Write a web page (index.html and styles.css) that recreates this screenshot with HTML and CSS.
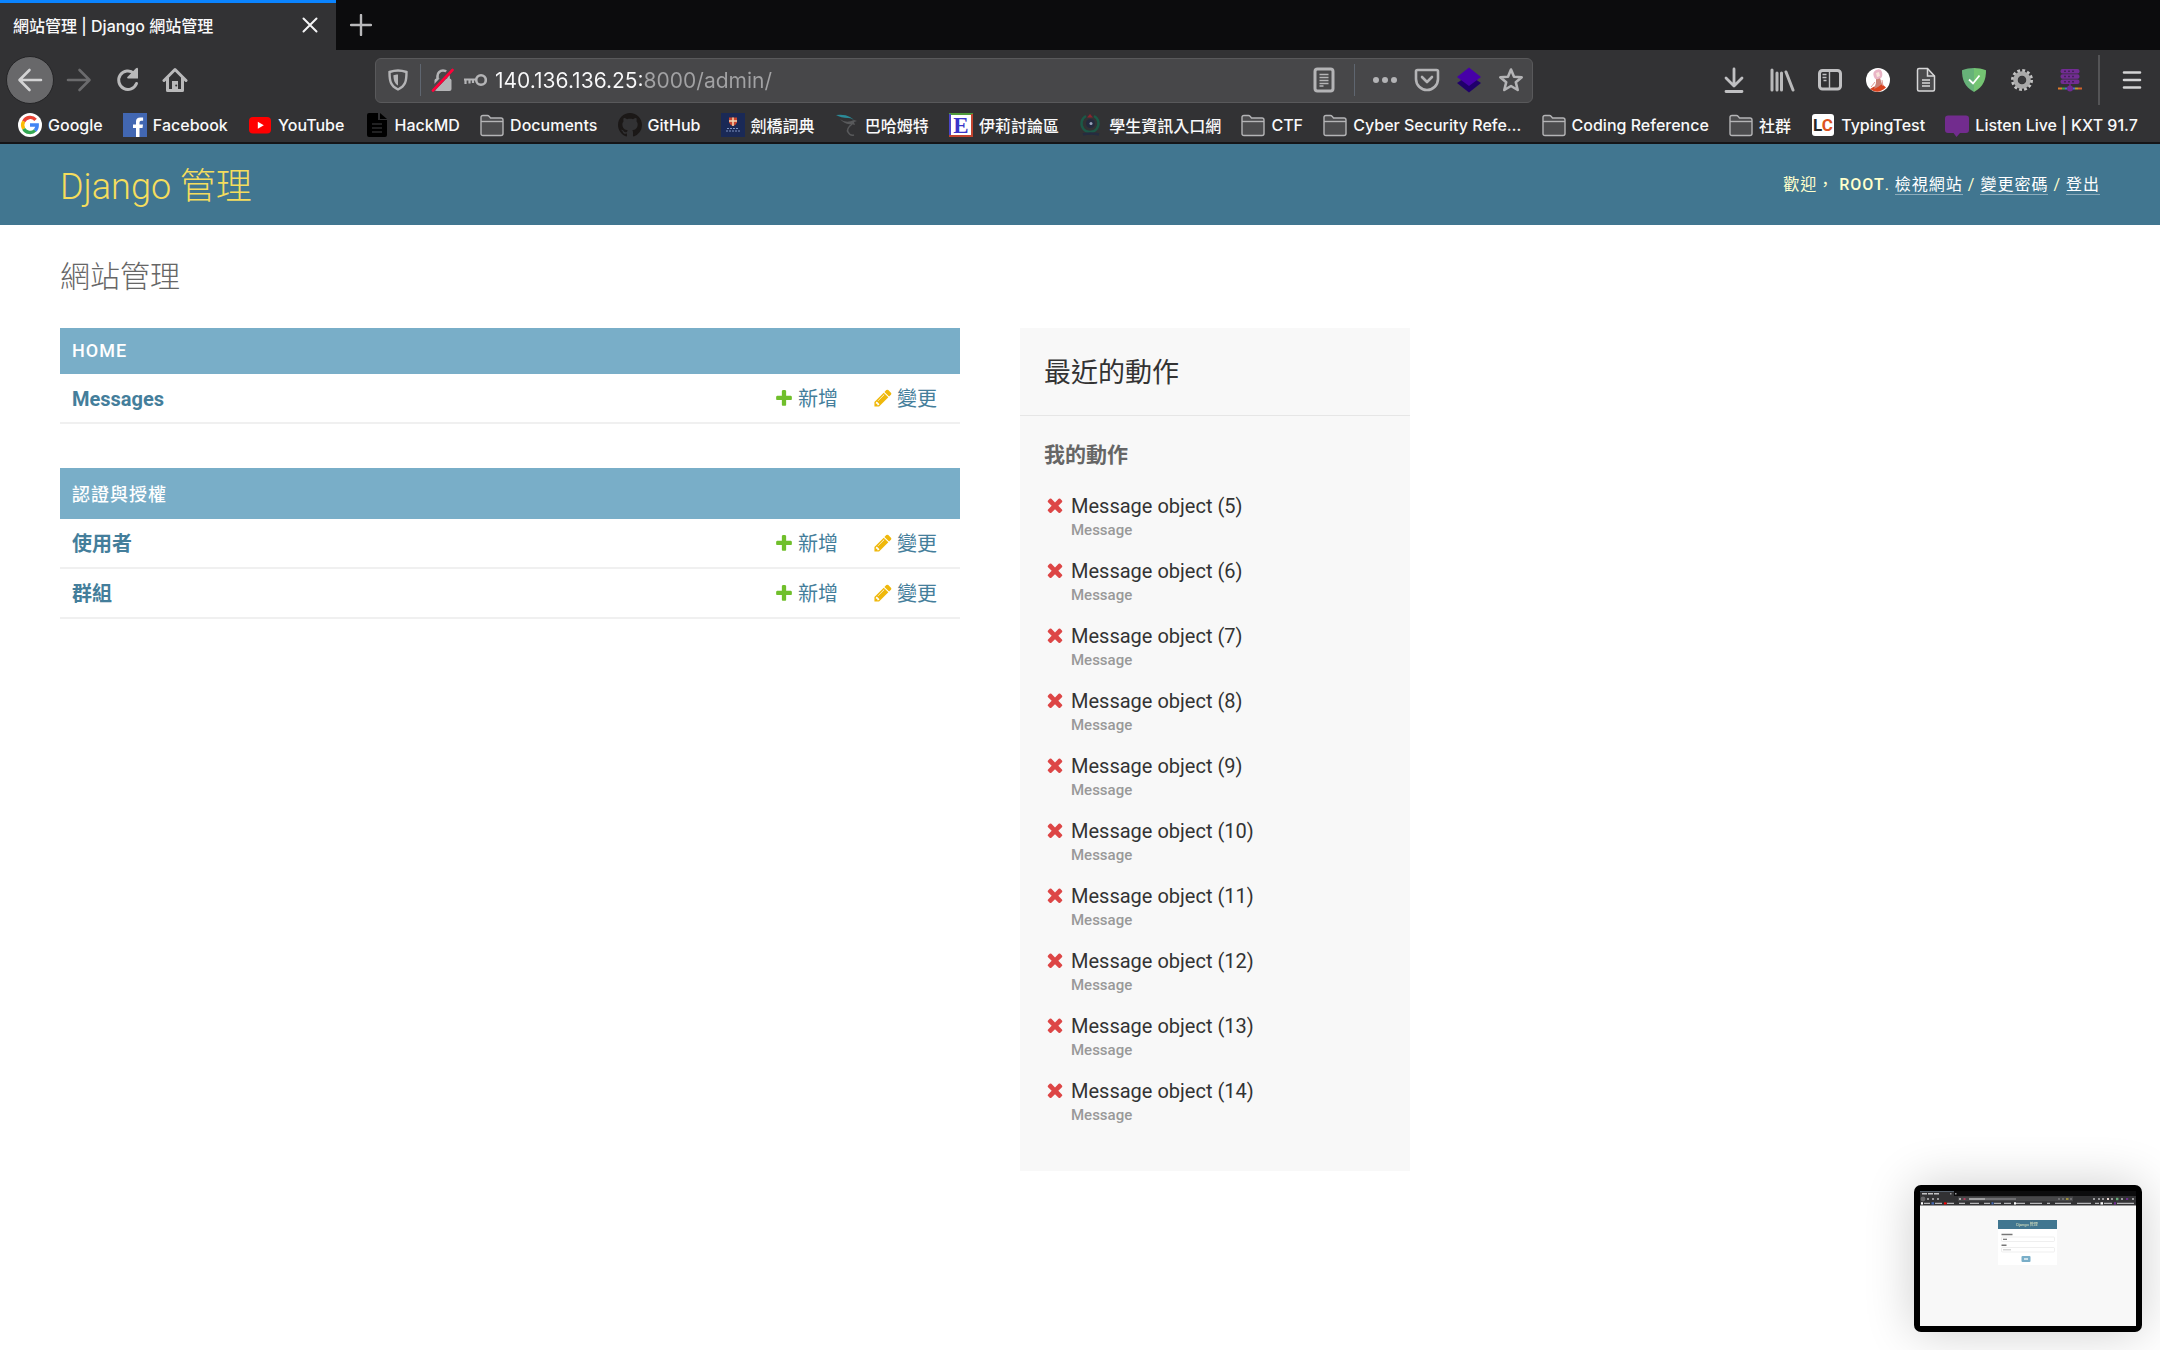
FILE: index.html
```html
<!DOCTYPE html>
<html lang="zh-Hant">
<head>
    <meta charset="UTF-8">
    <meta name="viewport" content="width=device-width, initial-scale=1.0">
    <title>網站管理 | Django 網站管理</title>
    <link rel="stylesheet" href="styles.css">
</head>
<body>
    <!-- Shared icons -->
    <svg class="sprite" aria-hidden="true">
        <symbol id="i-add" viewBox="0 0 1792 1792"><path fill="#70bf2b" d="M1600 796v192q0 40-28 68t-68 28h-416v416q0 40-28 68t-68 28h-192q-40 0-68-28t-28-68v-416h-416q-40 0-68-28t-28-68v-192q0-40 28-68t68-28h416v-416q0-40 28-68t68-28h192q40 0 68 28t28 68v416h416q40 0 68 28t28 68z"/></symbol>
        <symbol id="i-change" viewBox="0 0 1792 1792"><path fill="#efb80b" d="M491 1536l91-91-235-235-91 91v107h128v128h107zm523-928q0-22-22-22-10 0-17 7l-542 542q-7 7-7 17 0 22 22 22 10 0 17-7l542-542q7-7 7-17zm-54-192l416 416-832 832h-416v-416zm683 96q0 53-37 90l-166 166-416-416 166-165q36-38 90-38 53 0 91 38l235 234q37 39 37 91z"/></symbol>
        <symbol id="i-delete" viewBox="0 0 1792 1792"><path fill="#dd4646" d="M1490 1322q0 40-28 68l-136 136q-28 28-68 28t-68-28l-294-294-294 294q-28 28-68 28t-68-28l-136-136q-28-28-28-68t28-68l294-294-294-294q-28-28-28-68t28-68l136-136q28-28 68-28t68 28l294 294 294-294q28-28 68-28t68 28l136 136q28 28 28 68t-28 68l-294 294 294 294q28 28 28 68z"/></symbol>
        <symbol id="i-folder" viewBox="0 0 24 24"><path d="M1 4.500q0-2 2-2h4.500q1 0 1.600.8l1.400 1.700h10.500q2 0 2 2v13.500q0 2-2 2h-18q-2 0-2-2z" fill="#4c4c4e" stroke="#b4b4b6" stroke-width="1.400"/><path d="M1 8.500h22" stroke="#b4b4b6" stroke-width="1.400"/></symbol>
    </svg>

    <div class="browser">
        <div class="tabs">
            <div class="tab">
                <span class="tab-title">網站管理 | Django 網站管理</span>
                <button class="tab-close" aria-label="Close tab"><svg width="16" height="16" viewBox="0 0 16 16"><path d="M1.500 1.500l13 13M14.500 1.500l-13 13" stroke="#f4f4f5" stroke-width="2" stroke-linecap="round"/></svg></button>
            </div>
            <button class="tab-new" aria-label="New tab"><svg width="22" height="22" viewBox="0 0 22 22"><path d="M11 1v20M1 11h20" stroke="#b9b9ba" stroke-width="2.400" stroke-linecap="round"/></svg></button>
        </div>

        <div class="toolbar">
            <button class="tool back" aria-label="Back"><svg width="26" height="26" viewBox="0 0 26 26" fill="none" stroke="#d3d3d4" stroke-width="2.600" stroke-linecap="round" stroke-linejoin="round"><path d="M24 13H3M12.500 3L2.500 13l10 10"/></svg></button>
            <button class="tool" aria-label="Forward"><svg width="26" height="26" viewBox="0 0 26 26" fill="none" stroke="#6b6b6d" stroke-width="2.600" stroke-linecap="round" stroke-linejoin="round"><path d="M2 13h21M13.500 3l10 10-10 10"/></svg></button>
            <button class="tool" aria-label="Reload"><svg width="26" height="26" viewBox="0 0 26 26"><path d="M22.500 16.500A9.200 9.200 0 1 1 20 6.300" fill="none" stroke="#b9b9ba" stroke-width="3" stroke-linecap="round"/><path d="M24 1.500v10H14q-1.500-.3-.6-1.500L22 1.200q1.500-1 2 .3z" fill="#b9b9ba"/></svg></button>
            <button class="tool" aria-label="Home"><svg width="26" height="26" viewBox="0 0 26 26"><path d="M2 13.500L13 2.500l11 11M5.500 11v12.500h15V11" fill="none" stroke="#b9b9ba" stroke-width="3" stroke-linecap="round" stroke-linejoin="round"/><path d="M10 14h6v8h-6z" fill="#b9b9ba"/><circle cx="14.200" cy="18.500" r="1" fill="#323234"/></svg></button>
            <span class="spring"></span>

            <div class="urlbar">
                <button class="url-icon" aria-label="Tracking protection"><svg width="20" height="22" viewBox="0 0 20 22"><path d="M10 1.500c3 0 5.500.5 8.500 1.500 0 9-1 14-8.500 17.500C2.500 17 1.500 12 1.500 3 4.500 2 7 1.500 10 1.500z" fill="none" stroke="#b4b4b6" stroke-width="2.400"/><path d="M10 5.500c-2 0-3 .2-4.600.7.200 5 1 8 4.600 10.300z" fill="#b4b4b6"/></svg></button>
                <span class="url-sep"></span>
                <button class="url-icon" aria-label="Connection is not secure"><svg width="24" height="24" viewBox="0 0 24 24"><path d="M6.500 11V8a5.500 5.500 0 0 1 11 0v3" fill="none" stroke="#b4b4b6" stroke-width="2.600"/><rect x="3.500" y="10.500" width="17" height="12.500" rx="2" fill="#b4b4b6"/><path d="M1 22L21 1" stroke="#474749" stroke-width="5"/><path d="M2 22.500L21.500 2" stroke="#ff0039" stroke-width="2.600" stroke-linecap="round"/></svg></button>
                <button class="url-icon key" aria-label="Saved login"><svg width="24" height="14" viewBox="0 0 24 14"><circle cx="18" cy="7" r="4.800" fill="none" stroke="#b4b4b6" stroke-width="2.600"/><path d="M13 6.500H1M2.500 7v4M6.500 7v3.500M10 7v3" fill="none" stroke="#b4b4b6" stroke-width="2.200"/></svg></button>
                <input class="url" type="text" aria-label="Address" value="140.136.136.25:8000/admin/">
                <button class="url-icon wide" aria-label="Reader view"><svg width="22" height="26" viewBox="0 0 22 26"><rect x="2" y="2" width="18" height="22" rx="2.500" fill="none" stroke="#b4b4b6" stroke-width="3"/><path d="M6.500 7.500h9M6.500 10.500h9M6.500 13.500h9M6.500 16.500h9M6.500 19h4" stroke="#b4b4b6" stroke-width="1.300"/></svg></button>
                <span class="url-sep wide"></span>
                <button class="url-icon wide" aria-label="Page actions"><svg width="26" height="8" viewBox="0 0 26 8" fill="#b4b4b6"><circle cx="4" cy="4" r="3"/><circle cx="13" cy="4" r="3"/><circle cx="22" cy="4" r="3"/></svg></button>
                <button class="url-icon wide" aria-label="Pocket"><svg width="26" height="24" viewBox="0 0 26 24" fill="none" stroke="#b4b4b6" stroke-width="2.600" stroke-linecap="round" stroke-linejoin="round"><path d="M3.500 2h19q1.500 0 1.500 1.500V11a11 11 0 0 1-22 0V3.500Q2 2 3.500 2z"/><path d="M8 9l5 5 5-5"/></svg></button>
                <button class="url-icon wide" aria-label="Extension"><svg width="24" height="26" viewBox="0 0 24 26"><path d="M0 16l12-8 12 8-12 9.500z" fill="#20006b"/><path d="M12 .5L24 10 12 19 0 10z" fill="#4700a8"/></svg></button>
                <button class="url-icon wide" aria-label="Bookmark this page"><svg width="26" height="26" viewBox="0 0 26 26"><path d="M13 2.500l3 7.200 7.700.6-5.900 5 1.900 7.700L13 19l-6.700 4 1.900-7.700-5.900-5 7.700-.6z" fill="none" stroke="#b4b4b6" stroke-width="2.600" stroke-linejoin="round"/></svg></button>
            </div>

            <span class="spring"></span>
            <button class="tool wide" aria-label="Downloads"><svg width="22" height="26" viewBox="0 0 22 26" fill="none" stroke="#c0c0c2" stroke-width="2.800" stroke-linecap="round" stroke-linejoin="round"><path d="M11 2v16M3 11l8 8 8-8M3 24.500h16"/></svg></button>
            <button class="tool wide" aria-label="Library"><svg width="26" height="24" viewBox="0 0 26 24" fill="none" stroke="#b9b9ba" stroke-width="3" stroke-linecap="round"><path d="M3 2v20M8 5v17M12.500 5v17M17 4l7 18"/></svg></button>
            <button class="tool wide" aria-label="Sidebars"><svg width="26" height="24" viewBox="0 0 26 24"><rect x="2.500" y="2.500" width="21" height="18.500" rx="3" fill="none" stroke="#c0c0c2" stroke-width="3"/><path d="M12.500 3v18M5.500 6.500h4M5.500 9.500h4M6.500 12.500h3" stroke="#c0c0c2" stroke-width="1.400"/></svg></button>
            <button class="tool wide" aria-label="Account"><svg width="24" height="24" viewBox="0 0 24 24"><circle cx="12" cy="12" r="12" fill="#fff"/><path d="M4 21q4-3 7-3l5-2 4 3.500Q12 27 4 21z" fill="#d9431f"/><path d="M10 10h4l2 6-4 3-4 2 2-6z" fill="#c98276"/><path d="M8 9q-2-5 2-7 5-2 6 2 1 4-1 6l-3 1q-3 1-4-2z" fill="#e9b4c6"/><path d="M10 5l3-1 1 4-3 1z" fill="#f8e3da"/><path d="M9 14q-3 4-4 5M16 12l1 6" stroke="#e09a96" stroke-width="1"/></svg></button>
            <button class="tool wide" aria-label="Document"><svg width="20" height="26" viewBox="0 0 20 26"><path d="M1.500 3q0-1.500 1.500-1.500h8.500l7 7.500v13.500q0 1.500-1.500 1.500H3q-1.500 0-1.500-1.500z" fill="#4a4a4c" stroke="#d7d7d8" stroke-width="1.500"/><path d="M11.500 1.500V9h7" fill="none" stroke="#d7d7d8" stroke-width="1.500"/><path d="M6 13h8M6 16h8M6 19h8" stroke="#d7d7d8" stroke-width="1.500"/></svg></button>
            <button class="tool wide" aria-label="AdGuard"><svg width="24" height="24" viewBox="0 0 24 24"><path d="M12 0C8 0 4 .8 0 2.300 0 11 2 18.500 12 24z" fill="#67b279"/><path d="M12 0c4 0 8 .8 12 2.300C24 11 22 18.500 12 24z" fill="#74c472"/><path d="M7 11.500l4 4 6.500-8" fill="none" stroke="#fff" stroke-width="1.800"/></svg></button>
            <button class="tool wide" aria-label="Settings"><svg width="24" height="24" viewBox="0 0 24 24"><circle cx="12" cy="12" r="9.500" fill="none" stroke="#c3c3c3" stroke-width="3" stroke-dasharray="2.800 2.170"/><circle cx="12" cy="12" r="6.500" fill="none" stroke="#a9a9a9" stroke-width="4.500"/><circle cx="12" cy="12" r="3.800" fill="#39393b"/></svg></button>
            <button class="tool wide" aria-label="Proxy"><svg width="24" height="24" viewBox="0 0 24 24"><g fill="#722c93"><rect x="2.500" y="1" width="19" height="4.600" rx="2"/><rect x="2.500" y="6.200" width="19" height="4.600" rx="2"/><rect x="2.500" y="11.400" width="19" height="4.600" rx="2"/><path d="M11.300 16h1.400v4h-1.400z"/></g><path d="M6 3.300h12M6 8.500h12M6 13.700h12" stroke="#45205a" stroke-width="1.400" stroke-dasharray="2 2"/><path d="M0 20.500h4" stroke="#e07b2a" stroke-width="2"/><path d="M4 20.500h3" stroke="#3f9b47" stroke-width="2"/><path d="M7 20.500h2M15 20.500h2" stroke="#4f6ad0" stroke-width="2"/><path d="M17 20.500h3" stroke="#b89d30" stroke-width="2"/><path d="M20 20.500h4" stroke="#d2622c" stroke-width="2"/><circle cx="12" cy="20.500" r="3" fill="#722c93"/></svg></button>
            <span class="tool-sep"></span>
            <button class="tool wide" aria-label="Menu"><svg width="20" height="20" viewBox="0 0 20 20"><path d="M2 2.500h16M2 10h16M2 17.500h16" stroke="#d3d3d4" stroke-width="2.600" stroke-linecap="round"/></svg></button>
        </div>

        <nav class="bookmarks">
            <a href="#"><svg viewBox="0 0 24 24"><circle cx="12" cy="12" r="12" fill="#fff"/><g fill="none" stroke-width="3.400"><path d="M17.600 6.800A7.300 7.300 0 0 0 5.700 8.400" stroke="#ea4335"/><path d="M5.700 8.400a7.300 7.300 0 0 0 0 7.400" stroke="#fbbc05"/><path d="M5.700 15.800a7.300 7.300 0 0 0 11.400 1.600" stroke="#34a853"/><path d="M12 12h7.200q.1 3.400-2.200 5.500" stroke="#4285f4"/></g></svg>Google</a>
            <a href="#"><svg viewBox="0 0 24 24"><path d="M0 0h24v24H0z" fill="#4267b2"/><path d="M13 24v-9h-3v-3.600h3V8.600Q13 4.400 17.400 4.400l2.700.2v3.200h-1.900q-1.700 0-1.700 1.700v1.900h3.500l-.5 3.600h-3v9z" fill="#fff"/></svg>Facebook</a>
            <a href="#"><svg viewBox="0 0 24 24"><rect x="1" y="4" width="22" height="16.500" rx="4" fill="#f00"/><path d="M9.800 8.800l6 3.500-6 3.500z" fill="#fff"/></svg>YouTube</a>
            <a href="#"><svg viewBox="0 0 24 24"><path d="M4 0h9v7h9v15q0 2-2 2H4q-2 0-2-2V2q0-2 2-2z"/><path d="M15 0l7 6h-7z"/><path d="M7 11h10M7 15h10M7 19h10" stroke="#2c2c2e" stroke-width="1.400"/></svg>HackMD</a>
            <a href="#"><svg><use href="#i-folder"/></svg>Documents</a>
            <a href="#"><svg viewBox="0 0 16 16"><path fill="#1b1817" d="M8 0C3.580 0 0 3.580 0 8c0 3.540 2.290 6.530 5.470 7.590.4.070.55-.17.55-.38 0-.19-.01-.82-.01-1.490-2.010.37-2.530-.49-2.690-.94-.09-.23-.48-.94-.82-1.130-.28-.15-.68-.52-.01-.53.63-.01 1.080.58 1.230.82.72 1.210 1.870.87 2.330.66.070-.52.280-.87.510-1.070-1.780-.2-3.640-.89-3.640-3.950 0-.87.310-1.590.82-2.150-.08-.2-.36-1.020.08-2.120 0 0 .67-.21 2.200.82.640-.18 1.320-.27 2-.27s1.360.09 2 .27c1.530-1.040 2.200-.82 2.200-.82.440 1.100.160 1.920.08 2.120.510.560.82 1.270.82 2.150 0 3.070-1.870 3.750-3.650 3.950.290.250.540.730.540 1.480 0 1.070-.01 1.930-.01 2.200 0 .21.150.46.550.38A8.010 8.010 0 0 0 16 8c0-4.420-3.580-8-8-8z"/></svg>GitHub</a>
            <a href="#"><svg viewBox="0 0 24 24"><path d="M0 0h24v24H0z" fill="#1a2956"/><path d="M8 4.500h8v5q-1 2.500-4 3.500-3-1-4-3.500z" fill="#c9452f"/><path d="M12 4.500V13M8 8h8" stroke="#f3d9b4" stroke-width="1.500"/><path d="M6 15.500h12M5 18h14" stroke="#7f93c2" stroke-width="1" stroke-dasharray="2 1"/></svg>劍橋詞典</a>
            <a href="#"><svg viewBox="0 0 24 24"><path d="M1 2q9-1 14 2 4 2 5 5-2-4-7-4Q6 5 1 2z" fill="#2b8b98"/><path d="M5 6q6 5 14 1l3 1-3 1 1 3-4-1q-6 1-11-5z" fill="#58595b"/><path d="M17 11q-6 5-4 8 2 4 6 3" fill="none" stroke="#58595b" stroke-width="1.600"/></svg>巴哈姆特</a>
            <a href="#"><svg viewBox="0 0 24 24"><path d="M0 0h24v24H0z" fill="#fff"/><path d="M0 1h24" stroke="#4f9b3c" stroke-width="2"/><path d="M1 1v23" stroke="#4b45c8" stroke-width="2"/><path d="M23 1v22M0 23h24" stroke="#c2452f" stroke-width="2"/><text class="fav-e" x="12" y="20" text-anchor="middle">E</text></svg>伊莉討論區</a>
            <a href="#"><svg viewBox="0 0 24 24"><path d="M7 3a8.500 8.500 0 1 0 8 0" fill="none" stroke="#1c5947" stroke-width="2.400"/><circle cx="11.500" cy="10.500" r="4.500" fill="#232a3e"/><circle cx="12" cy="10.500" r="1.500" fill="#9aa4bb"/><path d="M8 4.500L11 1l3 3.500z" fill="#8d2630"/><path d="M4 21.500q7-2 16 0" stroke="#252c40" stroke-width="2.500" fill="none"/></svg>學生資訊入口網</a>
            <a href="#"><svg><use href="#i-folder"/></svg>CTF</a>
            <a href="#"><svg><use href="#i-folder"/></svg>Cyber Security Refe…</a>
            <a href="#"><svg><use href="#i-folder"/></svg>Coding Reference</a>
            <a href="#"><svg><use href="#i-folder"/></svg>社群</a>
            <a href="#"><svg viewBox="0 0 24 24"><rect x="1" y="1" width="22" height="22" rx="3" fill="#fff"/><text class="fav-lc" x="2" y="18"><tspan fill="#262626">L</tspan><tspan fill="#dd5423">C</tspan></text></svg>TypingTest</a>
            <a href="#"><svg viewBox="0 0 24 24"><path d="M3 2.500h18q3 0 3 3V17q0 3-3 3h-6l-3.500 4L8.500 20H3q-3 0-3-3V5.500q0-3 3-3z" fill="#722c8e"/></svg>Listen Live | KXT 91.7</a>
        </nav>
    </div>

    <header class="header">
        <h1 class="site-name"><a href="#">Django 管理</a></h1>
        <div class="user-tools">
            歡迎， <strong>root</strong>.
            <a href="#">檢視網站</a> /
            <a href="#">變更密碼</a> /
            <a href="#">登出</a>
        </div>
    </header>

    <main class="content">
        <h1 class="page-title">網站管理</h1>
        <div class="dashboard">
            <div class="modules">
                <table class="module">
                    <caption><a href="#">Home</a></caption>
                    <tr>
                        <th scope="row"><a href="#">Messages</a></th>
                        <td><a class="action" href="#"><svg><use href="#i-add"/></svg>新增</a></td>
                        <td><a class="action" href="#"><svg><use href="#i-change"/></svg>變更</a></td>
                    </tr>
                </table>
                <table class="module">
                    <caption><a href="#">認證與授權</a></caption>
                    <tr>
                        <th scope="row"><a href="#">使用者</a></th>
                        <td><a class="action" href="#"><svg><use href="#i-add"/></svg>新增</a></td>
                        <td><a class="action" href="#"><svg><use href="#i-change"/></svg>變更</a></td>
                    </tr>
                    <tr>
                        <th scope="row"><a href="#">群組</a></th>
                        <td><a class="action" href="#"><svg><use href="#i-add"/></svg>新增</a></td>
                        <td><a class="action" href="#"><svg><use href="#i-change"/></svg>變更</a></td>
                    </tr>
                </table>
            </div>

            <aside class="recent">
                <h2>最近的動作</h2>
                <h3>我的動作</h3>
                <ul>
                    <li><svg><use href="#i-delete"/></svg>Message object (5)<span class="kind">Message</span></li>
                    <li><svg><use href="#i-delete"/></svg>Message object (6)<span class="kind">Message</span></li>
                    <li><svg><use href="#i-delete"/></svg>Message object (7)<span class="kind">Message</span></li>
                    <li><svg><use href="#i-delete"/></svg>Message object (8)<span class="kind">Message</span></li>
                    <li><svg><use href="#i-delete"/></svg>Message object (9)<span class="kind">Message</span></li>
                    <li><svg><use href="#i-delete"/></svg>Message object (10)<span class="kind">Message</span></li>
                    <li><svg><use href="#i-delete"/></svg>Message object (11)<span class="kind">Message</span></li>
                    <li><svg><use href="#i-delete"/></svg>Message object (12)<span class="kind">Message</span></li>
                    <li><svg><use href="#i-delete"/></svg>Message object (13)<span class="kind">Message</span></li>
                    <li><svg><use href="#i-delete"/></svg>Message object (14)<span class="kind">Message</span></li>
                </ul>
            </aside>
        </div>
    </main>

    <!-- Floating preview of the login page -->
    <div class="preview">
        <svg width="216" height="135" viewBox="0 0 216 135" role="img" aria-label="Login page preview">
            <path d="M0 0h216v135H0z" fill="#f8f8f8"/>
            <path d="M0 0h216v5H0z" fill="#0c0c0d"/>
            <path d="M0 0h34v5H0zM0 5h216v9.500H0z" fill="#323234"/>
            <path d="M0 .5h34" stroke="#55606c"/>
            <path d="M2 2.700h17" stroke="#c4c4c6" stroke-width="1.500" stroke-dasharray="5 1"/>
            <path d="M30 2.700h1.500M35 2.700h1.500" stroke="#9a9a9c" stroke-width="1.500"/>
            <circle cx="3" cy="8" r="2.400" fill="#68686a"/>
            <path d="M7 8h2M12 8h2M17 8h2M173 8h2M178 8h2M182 8h2M191 8h2M201 8h2M212 8h2" stroke="#9a9a9c" stroke-width="1.800"/>
            <path d="M38 5.500h115v4.800H38z" fill="#474749"/>
            <path d="M49 8h16" stroke="#c9c9cb" stroke-width="1.400"/>
            <path d="M65 8h31M138 8h2M142 8h2M150 8h2" stroke="#7e7e80" stroke-width="1.400"/>
            <path d="M39 8h2" stroke="#aaa" stroke-width="2"/>
            <path d="M43.500 8h2" stroke="#b04060" stroke-width="2"/>
            <path d="M187 8h2" stroke="#f0dcd8" stroke-width="2.200"/>
            <path d="M196 8h2.400" stroke="#67b279" stroke-width="2.400"/>
            <path d="M206 8h2.200M194 12.400h2" stroke="#722c93" stroke-width="2.200"/>
            <path d="M146 8h2.500" stroke="#b5a53c" stroke-width="1.600"/>
            <path d="M4 12.400h6M15 12.400h7M27 12.400h7M39 12.400h6M50 12.400h9M64 12.400h6M74 12.400h7M84 12.400h7M96 12.400h9M110 12.400h12M127 12.400h3M135 12.400h16M157 12.400h14M175 12.400h4M184 12.400h8M197 12.400h17" stroke="#b8b8ba" stroke-width="1.400"/>
            <path d="M1 12.400h2M180.500 12.400h2.500M94 12.400h2" stroke="#fff" stroke-width="2.400"/>
            <path d="M11.500 12.400h2.500M71.500 12.400h2" stroke="#4267b2" stroke-width="2.400"/>
            <path d="M24 12.400h2.500" stroke="#f00" stroke-width="2"/>
            <path d="M78 29h59v45H78z" fill="#fff"/>
            <path d="M78 29h59v9H78z" fill="#417690"/>
            <text class="mini-title" x="107" y="35" text-anchor="middle">Django 管理</text>
            <path d="M81.500 43.500h11M81.500 54.300h5" stroke="#777" stroke-width="1.600"/>
            <rect x="81.500" y="46" width="53" height="4.500" rx="1" fill="#fff" stroke="#e4e4e4" stroke-width=".6"/>
            <rect x="81.500" y="56.500" width="53" height="4.500" rx="1" fill="#fff" stroke="#e4e4e4" stroke-width=".6"/>
            <path d="M83 48.300h4" stroke="#777" stroke-width="1.200"/>
            <path d="M83 58.800h8" stroke="#ccc" stroke-width="1.200"/>
            <rect x="101.500" y="65" width="9" height="6" rx="1" fill="#79aec8"/>
            <path d="M104 68h4" stroke="#e4eff5" stroke-width="1.600"/>
        </svg>
    </div>
</body>
</html>
```

FILE: styles.css
```css
/* General Styles */
* {
    box-sizing: border-box;
}
body {
    margin: 0;
    background: #fff;
    color: #333;
    font-family: Roboto, "Noto Sans CJK TC", sans-serif;
    font-size: 20px;
}
a {
    color: #447e9b;
    text-decoration: none;
}
button {
    display: flex;
    align-items: center;
    justify-content: center;
    padding: 0;
    border: none;
    background: none;
    cursor: pointer;
}
.sprite {
    display: none;
}

/* Browser chrome */
.browser {
    background: #323234;
    border-bottom: 2px solid #151517;
    color: #f9f9fa;
    font-family: Inter, "Noto Sans CJK TC", sans-serif;
    font-size: 16px;
    font-weight: 500;
}
.tabs {
    display: flex;
    height: 50px;
    background: #0c0c0d;
}
.tab {
    display: flex;
    align-items: center;
    justify-content: space-between;
    width: 336px;
    padding: 0 16px 3px 13px;
    border-top: 3px solid #0a84ff;
    background: #323234;
}
.tab-close {
    width: 20px;
    height: 20px;
}
.tab-new {
    width: 50px;
}
.toolbar {
    display: flex;
    align-items: center;
    height: 58px;
    padding: 2px 4px 0 6px;
}
.tool {
    width: 46px;
    height: 48px;
    margin-left: 2px;
}
.tool.back {
    width: 48px;
    margin-left: 0;
    border: 1px solid #252527;
    border-radius: 50%;
    background: #68686a;
}
.tool.wide {
    width: 48px;
    margin-left: 0;
}
.tool-sep {
    width: 2px;
    height: 50px;
    margin: 0 8px 0 4px;
    background: #545456;
}
.spring {
    flex: 1 1 177px;
}
.urlbar {
    display: flex;
    align-items: center;
    flex: 6 1 1158px;
    height: 45px;
    padding: 0 0 0 4px;
    border: 1px solid #59595b;
    border-radius: 6px;
    background: #474749;
}
.url-icon {
    width: 36px;
    height: 40px;
}
.url-icon.key {
    width: 28px;
}
.url-icon.wide {
    width: 42px;
}
.url-sep {
    width: 1px;
    height: 32px;
    margin: 0 4px;
    background: #5f6670;
}
.url-sep.wide {
    margin: 0 9px;
}
.url {
    flex: 1;
    min-width: 0;
    margin-left: 6px;
    padding: 0;
    border: none;
    outline: none;
    /* host in white, port and path in grey */
    background: linear-gradient(to right, #f9f9fa 147px, #a2a2a4 147px);
    -webkit-background-clip: text;
    background-clip: text;
    color: transparent;
    font-family: inherit;
    font-size: 21px;
    font-weight: 400;
}
.bookmarks {
    display: flex;
    align-items: center;
    justify-content: space-between;
    height: 34px;
    padding: 0 22px 0 18px;
    white-space: nowrap;
}
.bookmarks a {
    display: flex;
    align-items: center;
    gap: 6px;
    color: #f9f9fa;
}
.bookmarks svg {
    width: 24px;
    height: 24px;
}
.fav-e {
    fill: #3a36c8;
    font-family: "Liberation Serif", serif;
    font-size: 23px;
    font-weight: 700;
}
.fav-lc {
    font-family: Roboto, sans-serif;
    font-size: 17px;
    font-weight: 700;
}

/* Header */
.header {
    display: flex;
    align-items: center;
    justify-content: space-between;
    height: 81px;
    padding: 0 60px 4px;
    background: #417690;
    color: #ffc;
}
.site-name {
    margin: 0;
    font-size: 36px;
    font-weight: 300;
}
.site-name a {
    color: #f5dd5d;
}
.user-tools {
    font-size: 16px;
    letter-spacing: 1px;
    text-transform: uppercase;
}
.user-tools strong {
    font-weight: 500;
}
.user-tools a {
    border-bottom: 1px solid rgba(255, 255, 255, 0.4);
    color: #fff;
}

/* Content */
.content {
    padding: 31px 60px;
}
.page-title {
    margin: 0 0 30px;
    color: #666;
    font-size: 30px;
    font-weight: 300;
    line-height: 42px;
}
.dashboard {
    display: grid;
    grid-template-columns: minmax(0, 900px) 390px;
    align-items: start;
    gap: 60px;
}
.module {
    width: 100%;
    margin-bottom: 44px;
    border-collapse: collapse;
}
.module caption {
    padding: 12px 12px 13px;
    background: #79aec8;
    font-size: 18px;
    font-weight: 500;
    letter-spacing: 1px;
    text-align: left;
    text-transform: uppercase;
}
.module caption a {
    color: #fff;
}
.module th,
.module td {
    padding: 13px 12px 11px;
    border-bottom: 2px solid #f0f0f0;
    line-height: 24px;
    text-align: left;
}
.module td {
    width: 99px;
}
.action {
    display: flex;
    align-items: center;
    gap: 4px;
    white-space: nowrap;
}
.action svg {
    width: 20px;
    height: 20px;
    margin-bottom: 2px;
}

/* Recent actions */
.recent {
    padding-bottom: 29px;
    background: #f8f8f8;
}
.recent h2 {
    margin: 0;
    padding: 25px 24px 22px;
    border-bottom: 1px solid #e6e6e6;
    font-size: 27px;
    font-weight: 400;
    line-height: 40px;
}
.recent h3 {
    margin: 24px 24px 22px;
    color: #666;
    font-size: 21px;
    line-height: 30px;
}
.recent ul {
    margin: 0;
    padding: 0 24px;
    list-style: none;
}
.recent li {
    display: grid;
    grid-template-columns: 22px 1fr;
    align-items: center;
    column-gap: 5px;
    margin-bottom: 16px;
    line-height: 28px;
}
.recent li svg {
    width: 22px;
    height: 22px;
    margin-bottom: 3px;
}
.kind {
    grid-column: 2;
    color: #999;
    font-size: 15px;
    font-weight: 500;
    line-height: 21px;
}

/* Preview thumbnail */
.preview {
    position: fixed;
    right: 18px;
    bottom: 18px;
    padding: 6px;
    border-radius: 7px;
    background: #000;
    box-shadow: 0 0 50px rgba(0, 0, 0, 0.2);
}
.preview svg {
    display: block;
}
.mini-title {
    fill: #dbe4c0;
    font-size: 4px;
}
```
